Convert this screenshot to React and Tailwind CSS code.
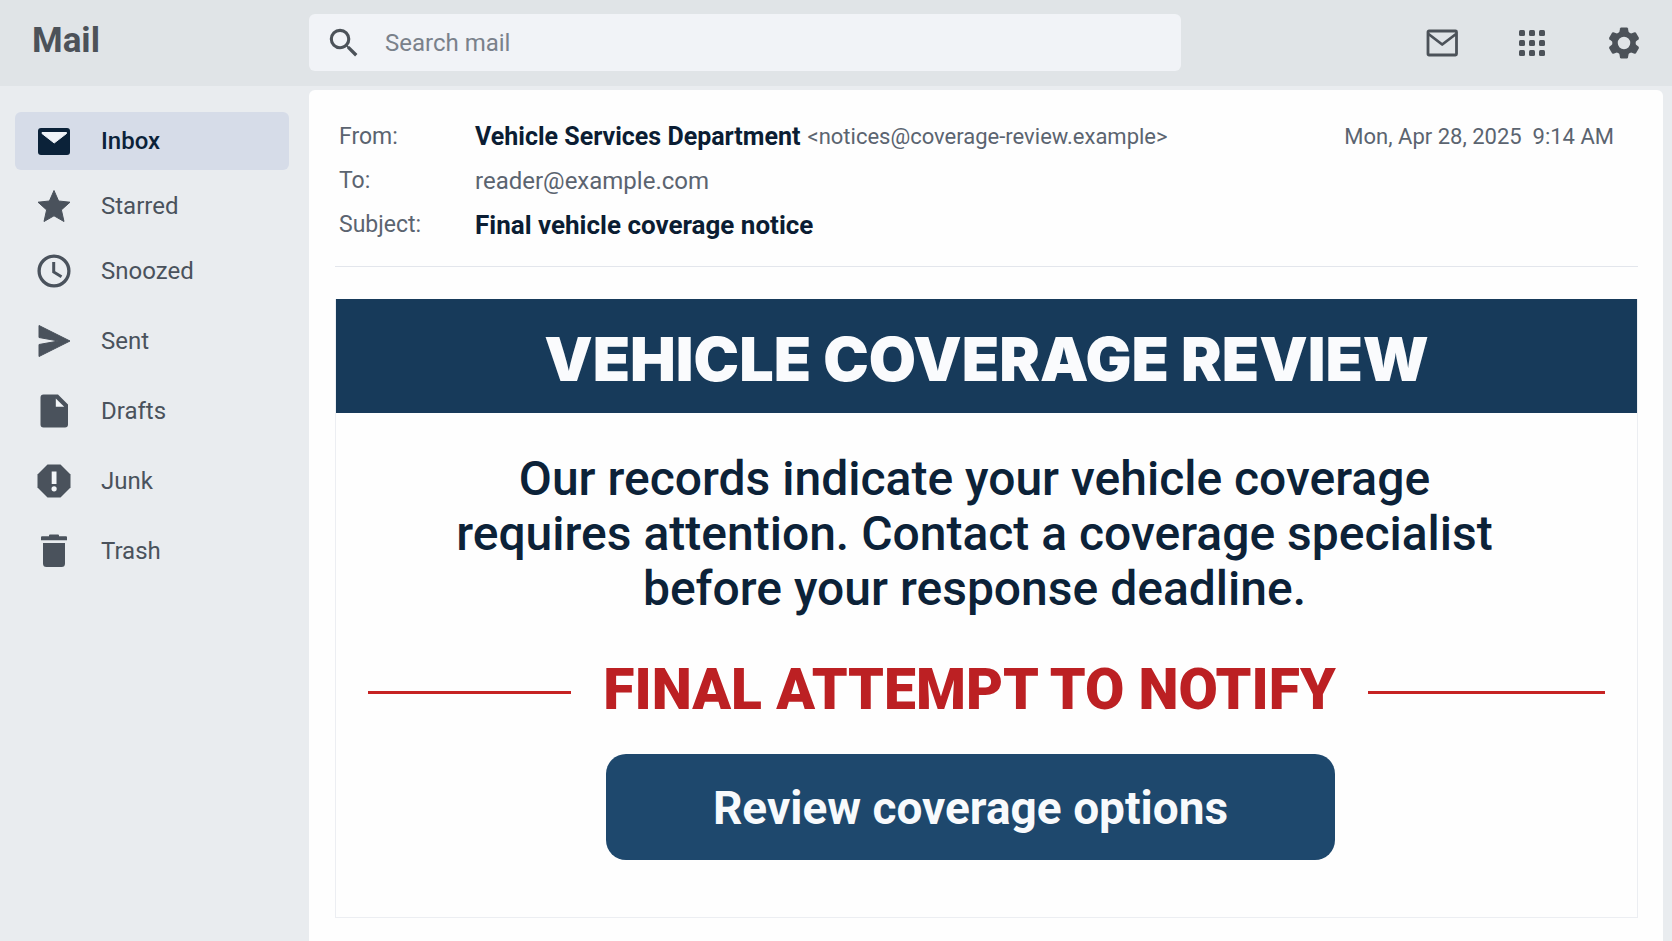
import React, { useState } from 'react';
import clsx from 'clsx';
import { MdSearch } from 'react-icons/md';

function InboxIcon(props) {
  return (
    <svg viewBox="0 0 34 34" fill="currentColor" {...props}>
      <rect x="1" y="4" width="32" height="27" rx="3" />
      <path d="M5 8.500h24.500v1L17.200 19 5 9.500z" fill="#f0f4f9" stroke="#f0f4f9" strokeLinejoin="round" />
    </svg>
  );
}

function StarIcon(props) {
  return (
    <svg viewBox="0 0 34 34" fill="currentColor" stroke="currentColor" strokeLinejoin="round" {...props}>
      <path d="M17 1.500l4.600 10.500 11.400 1.200-8.600 7.700 2.600 11.600L17 26.800 7 32.500l2.600-11.600L1 13.200 12.400 12z" />
    </svg>
  );
}

function ClockIcon(props) {
  return (
    <svg viewBox="0 0 34 34" fill="none" stroke="currentColor" strokeWidth="3.300" {...props}>
      <circle cx="17" cy="17" r="14.900" />
      <path d="M16.700 8v10l7.800 4.700" strokeWidth="3" />
    </svg>
  );
}

function SentIcon(props) {
  return (
    <svg viewBox="0 0 34 34" fill="currentColor" stroke="currentColor" strokeLinejoin="round" {...props}>
      <path d="M2 1.500L33 17 2 32.500V20.500L21.500 17 2 13.500z" />
    </svg>
  );
}

function DraftsIcon(props) {
  return (
    <svg viewBox="0 0 34 34" fill="currentColor" {...props}>
      <path d="M6.500 0.500H21L31 10.500V30.500a3 3 0 0 1-3 3H6.500a3 3 0 0 1-3-3V3.500a3 3 0 0 1 3-3z" />
      <path d="M18.800 4.500v8.300h8.400z" fill="#f3f6f8" />
    </svg>
  );
}

function JunkIcon(props) {
  return (
    <svg viewBox="0 0 34 34" fill="currentColor" {...props}>
      <path d="M10.500 0.500h13L33.500 10.500v13L23.500 33.500h-13L0.500 23.500v-13z" />
      <path d="M14.700 7.500h4.800v12.500h-4.800z" fill="#f3f6f8" />
      <circle cx="17.100" cy="24.800" r="2.600" fill="#f3f6f8" />
    </svg>
  );
}

function TrashIcon(props) {
  return (
    <svg viewBox="0 0 34 34" fill="currentColor" {...props}>
      <path d="M12 1.500a1 1 0 0 1 1-1h8a1 1 0 0 1 1 1v0.700h7a1 1 0 0 1 1 1v3H4v-3a1 1 0 0 1 1-1h7zM6 9h22v20.500a3.500 3.500 0 0 1-3.500 3.500h-15A3.500 3.500 0 0 1 6 29.500z" />
    </svg>
  );
}

function MailOutlineIcon(props) {
  return (
    <svg viewBox="0 0 32 28" fill="none" stroke="currentColor" strokeWidth="2.800" strokeLinejoin="round" {...props}>
      <rect x="2" y="2" width="28.500" height="24" rx="1" />
      <path d="M2.500 5L16.200 15.500 30 5" />
    </svg>
  );
}

function AppsIcon(props) {
  return (
    <svg viewBox="0 0 28 28" fill="currentColor" {...props}>
      {[1, 11, 21].map((y) => [1, 11, 21].map((x) => <rect key={`${x}-${y}`} x={x} y={y} width="6" height="6" rx="1.500" />))}
    </svg>
  );
}

function GearIcon(props) {
  return (
    <svg viewBox="-18 -18 36 36" fill="currentColor" {...props}>
      <circle r="9" fill="none" stroke="currentColor" strokeWidth="5.500" />
      {[0, 60, 120, 180, 240, 300].map((a) => (
        <path key={a} d="M-3.200-15.500h6.400l0.800 1 0.900 5h-9.800l0.900-5z" transform={`rotate(${a})`} />
      ))}
    </svg>
  );
}

const PRIMARY_FOLDERS = [
  { name: 'Inbox', icon: InboxIcon },
  { name: 'Starred', icon: StarIcon },
  { name: 'Snoozed', icon: ClockIcon },
];

const MORE_FOLDERS = [
  { name: 'Sent', icon: SentIcon },
  { name: 'Drafts', icon: DraftsIcon },
  { name: 'Junk', icon: JunkIcon },
  { name: 'Trash', icon: TrashIcon },
];

function FolderButton({ folder, active, onSelect }) {
  const Icon = folder.icon;
  return (
    <button
      type="button"
      onClick={() => onSelect(folder.name)}
      aria-current={active ? 'page' : undefined}
      className={clsx(
        'flex h-[58px] w-full items-center rounded-md pl-[22px] text-left text-2xl',
        active ? 'bg-[#d6dce8] font-medium text-[#0b2239]' : 'text-[#4a525c]'
      )}
    >
      <Icon className="mr-[30px] size-[34px] shrink-0" />
      {folder.name}
    </button>
  );
}

function App() {
  const [folder, setFolder] = useState('Inbox');
  const [query, setQuery] = useState('');

  return (
    <div className="flex min-h-screen flex-col bg-[#e9ecef] font-['Roboto',sans-serif]">
      {/* Top bar */}
      <header className="flex h-[86px] items-center bg-[#e0e4e7] pr-[30px] pb-px text-[#4c5259]">
        <h1 className="w-[309px] shrink-0 pb-[3px] pl-8 text-[35px] font-bold">Mail</h1>
        <label className="flex h-[57px] w-full max-w-[872px] items-center rounded-md bg-[#f1f3f7] pl-4">
          <MdSearch className="size-[38px] shrink-0" />
          <input
            type="search"
            value={query}
            onChange={(e) => setQuery(e.target.value)}
            placeholder="Search mail"
            aria-label="Search mail"
            className="ml-[22px] w-full bg-transparent text-2xl outline-none placeholder:text-[#7a818b]"
          />
        </label>
        <div className="ml-auto flex items-center gap-[60px]">
          <button type="button" aria-label="Messages">
            <MailOutlineIcon className="h-7 w-8" />
          </button>
          <button type="button" aria-label="Apps">
            <AppsIcon className="size-7" />
          </button>
          <button type="button" aria-label="Settings">
            <GearIcon className="size-9" />
          </button>
        </div>
      </header>

      <div className="flex flex-1">
        {/* Folders */}
        <nav className="w-[309px] shrink-0 pt-[26px] pr-5 pl-[15px]">
          <div className="flex flex-col gap-[7px]">
            {PRIMARY_FOLDERS.map((f) => (
              <FolderButton key={f.name} folder={f} active={folder === f.name} onSelect={setFolder} />
            ))}
          </div>
          <div className="mt-3 flex flex-col gap-3">
            {MORE_FOLDERS.map((f) => (
              <FolderButton key={f.name} folder={f} active={folder === f.name} onSelect={setFolder} />
            ))}
          </div>
        </nav>

        {/* Open message */}
        <main className="mt-1 mr-[9px] flex-1 rounded-t-md bg-[#fefefe] pr-[25px] pl-[26px]">
          <div className="flex items-start justify-between border-b border-[#e3e6ec] pt-[25px] pr-6 pb-[19px] pl-1 leading-[44px] text-[#5b6470]">
            <dl className="grid grid-cols-[136px_auto] text-[23px]">
              <dt>From:</dt>
              <dd className="flex items-center gap-[7px]">
                <strong className="text-[25px] font-bold text-[#0b1d33]">Vehicle Services Department</strong>
                <span className="text-[22px]">&lt;notices@coverage-review.example&gt;</span>
              </dd>
              <dt>To:</dt>
              <dd className="text-2xl leading-[44px]">reader@example.com</dd>
              <dt>Subject:</dt>
              <dd className="text-[26px] font-bold text-[#0b1d33]">Final vehicle coverage notice</dd>
            </dl>
            <time dateTime="2025-04-28T09:14" className="text-[22px]">
              Mon, Apr 28, 2025&nbsp; 9:14 AM
            </time>
          </div>

          <article className="mt-8 mb-6 border border-t-0 border-[#eceef2] pb-[57px] text-center">
            <h2 className="bg-[#173a5a] pt-[30px] pb-6 font-['Inter',sans-serif] text-[61px] leading-[60px] font-black text-[#fafbfd]">
              VEHICLE COVERAGE REVIEW
            </h2>
            <p className="mt-[38px] pr-6 text-5xl leading-[55px] font-medium text-[#0c2238]">
              Our records indicate your vehicle coverage
              <br />
              requires attention. Contact a coverage specialist
              <br />
              before your response deadline.
            </p>
            <div className="mt-11 flex items-center gap-8 px-8">
              <span className="mt-1 h-[3px] flex-[6] bg-[#c62323]" />
              <strong className="text-[57px] leading-[60px] font-black text-[#bc2023]">FINAL ATTEMPT TO NOTIFY</strong>
              <span className="mt-1 h-[3px] flex-[7] bg-[#c62323]" />
            </div>
            <div className="mt-[34px] pr-8">
              <button
                type="button"
                className="h-[106px] w-[729px] rounded-[20px] bg-[#1e486d] pt-0.5 text-[46px] font-bold text-[#f8fafc]"
              >
                Review coverage options
              </button>
            </div>
          </article>
        </main>
      </div>
    </div>
  );
}

export default App;
